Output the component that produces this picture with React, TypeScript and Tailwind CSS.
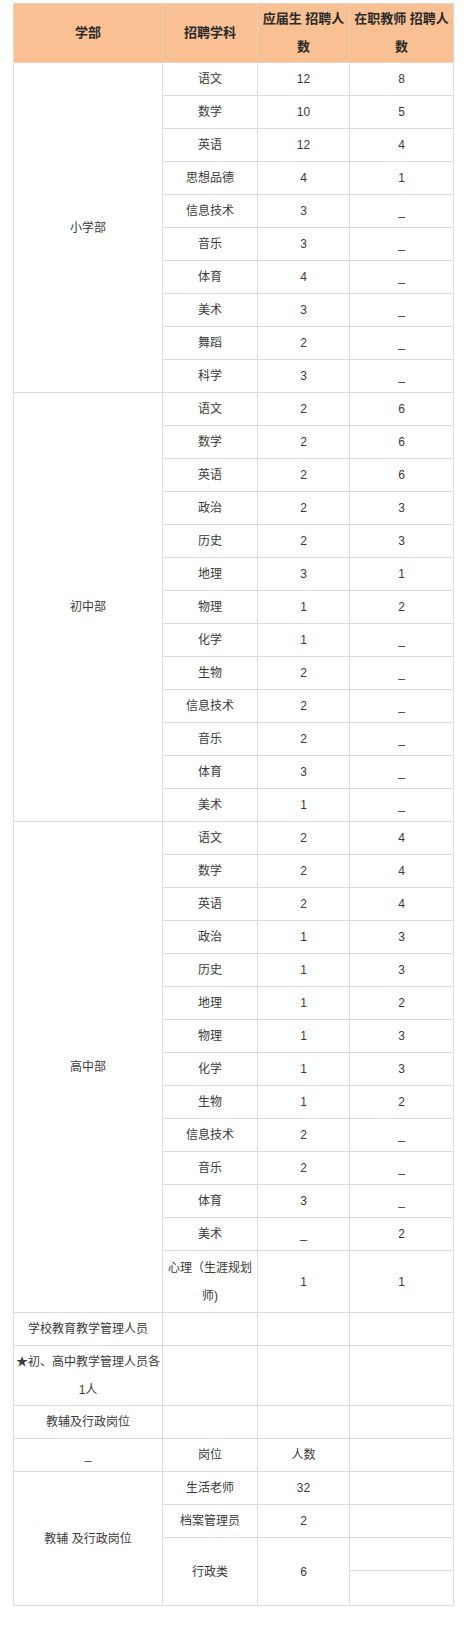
import React from "react";

type Row = [string, string, string];

const PRIMARY: Row[] = [
  ["语文", "12", "8"],
  ["数学", "10", "5"],
  ["英语", "12", "4"],
  ["思想品德", "4", "1"],
  ["信息技术", "3", "_"],
  ["音乐", "3", "_"],
  ["体育", "4", "_"],
  ["美术", "3", "_"],
  ["舞蹈", "2", "_"],
  ["科学", "3", "_"],
];

const JUNIOR: Row[] = [
  ["语文", "2", "6"],
  ["数学", "2", "6"],
  ["英语", "2", "6"],
  ["政治", "2", "3"],
  ["历史", "2", "3"],
  ["地理", "3", "1"],
  ["物理", "1", "2"],
  ["化学", "1", "_"],
  ["生物", "2", "_"],
  ["信息技术", "2", "_"],
  ["音乐", "2", "_"],
  ["体育", "3", "_"],
  ["美术", "1", "_"],
];

const SENIOR: Row[] = [
  ["语文", "2", "4"],
  ["数学", "2", "4"],
  ["英语", "2", "4"],
  ["政治", "1", "3"],
  ["历史", "1", "3"],
  ["地理", "1", "2"],
  ["物理", "1", "3"],
  ["化学", "1", "3"],
  ["生物", "1", "2"],
  ["信息技术", "2", "_"],
  ["音乐", "2", "_"],
  ["体育", "3", "_"],
  ["美术", "_", "2"],
];

const td = "border border-[#dcdcdc] px-[2px] py-0 text-center align-middle leading-[28px]";

function Section({ name, rows, extra }: { name: string; rows: Row[]; extra?: React.ReactNode }) {
  const span = rows.length + (extra ? 1 : 0);
  return (
    <>
      {rows.map(([subject, fresh, onJob], i) => (
        <tr key={subject + i} className="h-[33px]">
          {i === 0 && (
            <td rowSpan={span} className={td}>
              {name}
            </td>
          )}
          <td className={td}>{subject}</td>
          <td className={td}>{fresh}</td>
          <td className={td}>{onJob}</td>
        </tr>
      ))}
      {extra}
    </>
  );
}

export default function App() {
  return (
    <div className="min-h-[1625px] w-[467px] bg-white pt-[3px] font-['Liberation_Sans','Noto_Sans_CJK_SC',sans-serif] text-[12px] text-[#3a3a3a]">
      <table className="ml-[13px] w-[440px] table-fixed border-collapse">
        <colgroup>
          <col className="w-[149px]" />
          <col className="w-[95px]" />
          <col className="w-[92px]" />
          <col className="w-[104px]" />
        </colgroup>
        <thead>
          <tr className="h-[59px] bg-[#f9c193] text-[13px] font-bold text-[#2a2a2a]">
            <th className="border border-[#ecd3bc] text-center align-middle leading-[28px]">学部</th>
            <th className="border border-[#ecd3bc] text-center align-middle leading-[28px]">招聘学科</th>
            <th className="border border-[#ecd3bc] text-center align-middle leading-[28px]">
              应届生 招聘人
              <br />数
            </th>
            <th className="border border-[#ecd3bc] text-center align-middle leading-[28px]">
              在职教师 招聘人
              <br />数
            </th>
          </tr>
        </thead>
        <tbody>
          <Section name="小学部" rows={PRIMARY} />
          <Section name="初中部" rows={JUNIOR} />
          <Section
            name="高中部"
            rows={SENIOR}
            extra={
              <tr className="h-[62px]">
                <td className={td}>
                  心理（生涯规划
                  <br />
                  师)
                </td>
                <td className={td}>1</td>
                <td className={td}>1</td>
              </tr>
            }
          />
          <tr className="h-[33px]">
            <td className={td}>学校教育教学管理人员</td>
            <td className={td}></td>
            <td className={td}></td>
            <td className={td}></td>
          </tr>
          <tr className="h-[60px]">
            <td className={td}>
              ★初、高中教学管理人员各
              <br />
              1人
            </td>
            <td className={td}></td>
            <td className={td}></td>
            <td className={td}></td>
          </tr>
          <tr className="h-[33px]">
            <td className={td}>教辅及行政岗位</td>
            <td className={td}></td>
            <td className={td}></td>
            <td className={td}></td>
          </tr>
          <tr className="h-[33px]">
            <td className={td}>_</td>
            <td className={td}>岗位</td>
            <td className={td}>人数</td>
            <td className={td}></td>
          </tr>
          <tr className="h-[33px]">
            <td rowSpan={4} className={td}>
              教辅 及行政岗位
            </td>
            <td className={td}>生活老师</td>
            <td className={td}>32</td>
            <td className={td}></td>
          </tr>
          <tr className="h-[33px]">
            <td className={td}>档案管理员</td>
            <td className={td}>2</td>
            <td className={td}></td>
          </tr>
          <tr className="h-[33px]">
            <td rowSpan={2} className={td}>
              行政类
            </td>
            <td rowSpan={2} className={td}>
              6
            </td>
            <td className={td}></td>
          </tr>
          <tr className="h-[35px]">
            <td className={td}></td>
          </tr>
        </tbody>
      </table>
    </div>
  );
}
